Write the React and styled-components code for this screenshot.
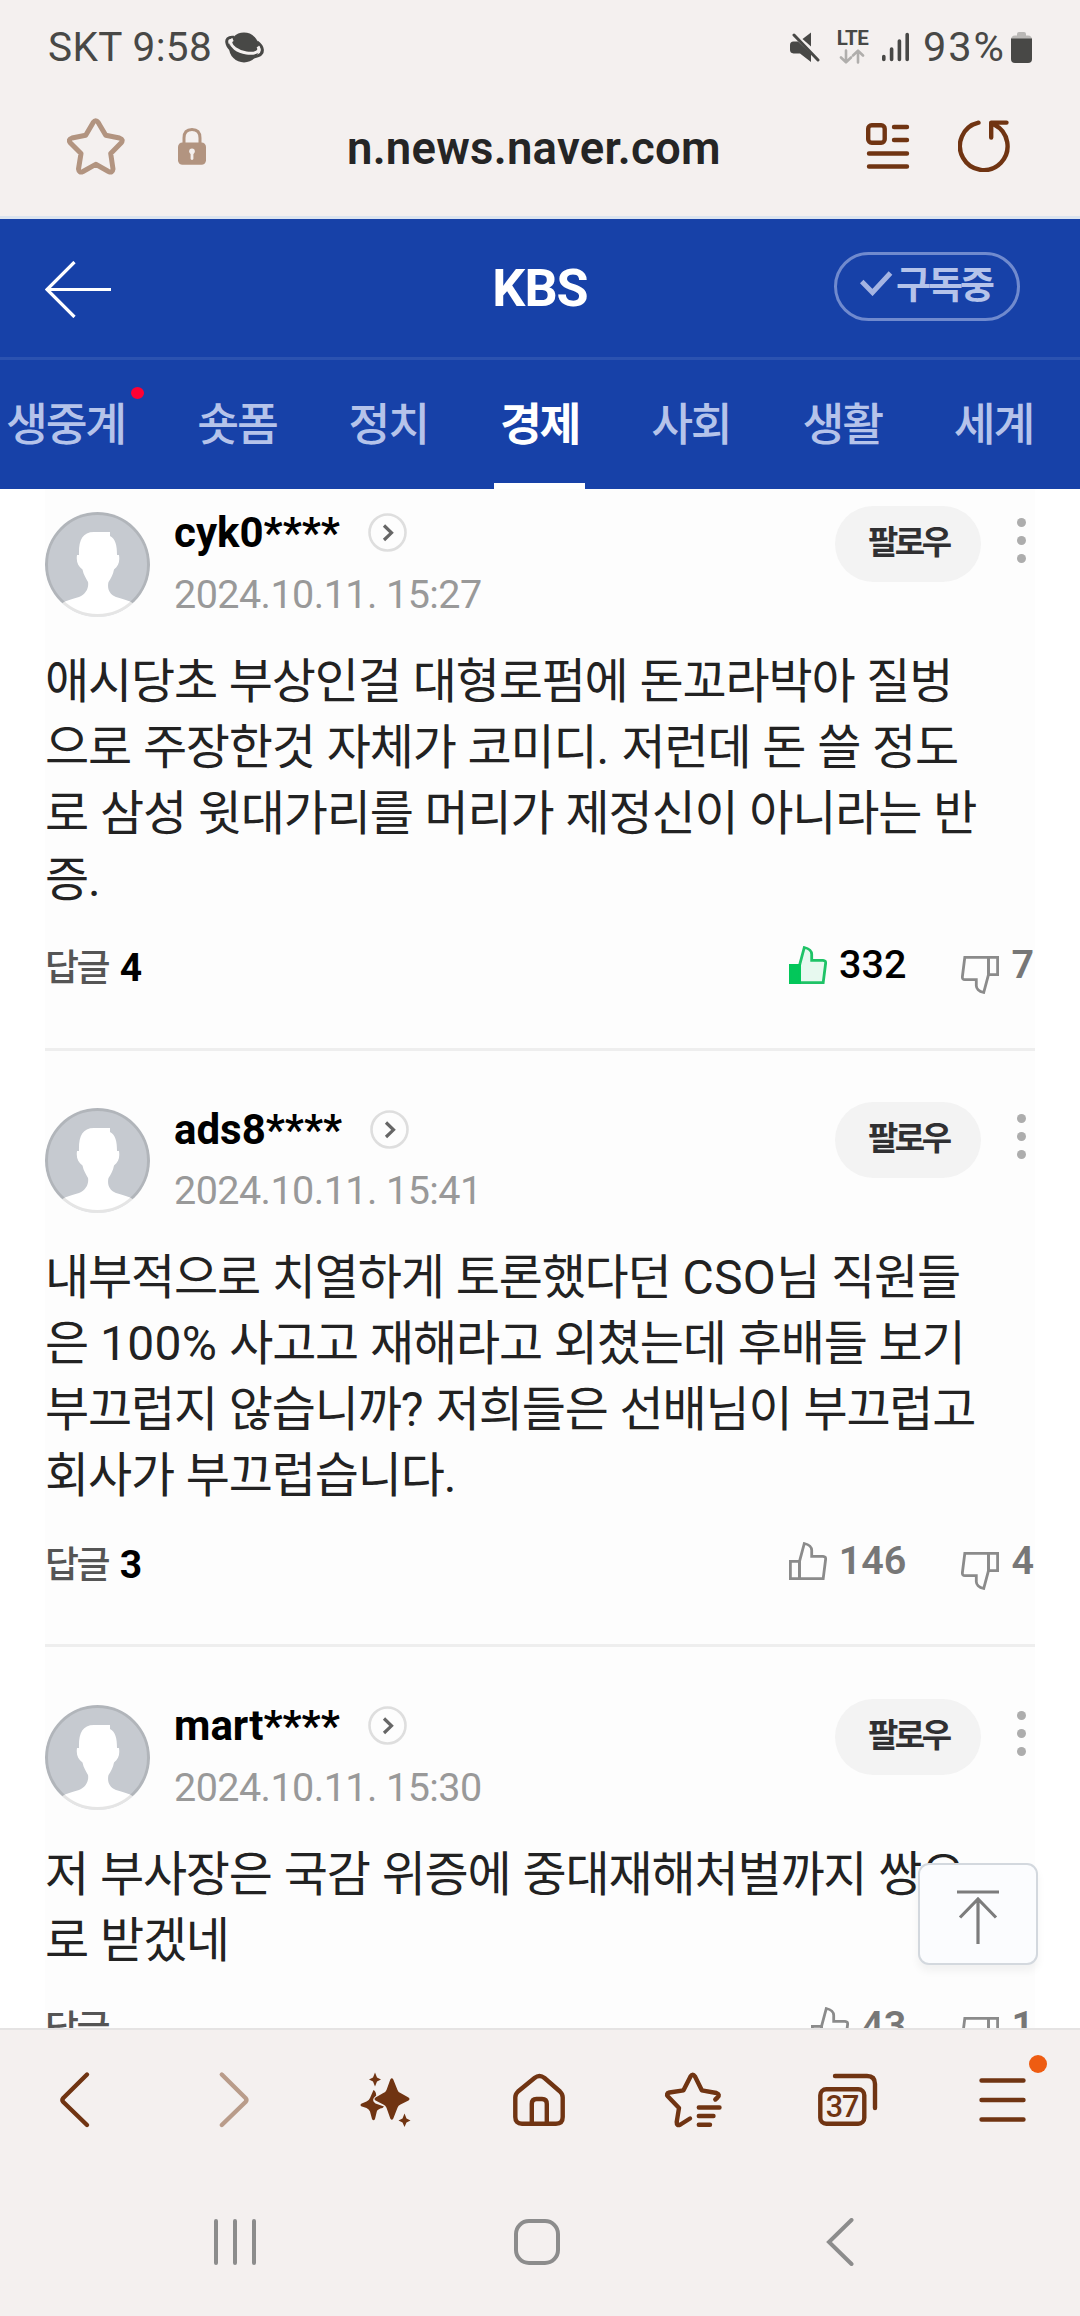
import React from 'react'
import styled, { createGlobalStyle } from 'styled-components';

const comments = [
  {
    id: 1,
    name: 'cyk0****',
    date: '2024.10.11. 15:27',
    lines: [
      '애시당초 부상인걸 대형로펌에 돈꼬라박아 질벙',
      '으로 주장한것 자체가 코미디. 저런데 돈 쓸 정도',
      '로 삼성 윗대가리를 머리가 제정신이 아니라는 반',
      '증.',
    ],
    replies: 4,
    up: 332,
    down: 7,
    liked: true,
  },
  {
    id: 2,
    name: 'ads8****',
    date: '2024.10.11. 15:41',
    lines: [
      '내부적으로 치열하게 토론했다던 CSO님 직원들',
      '은 100% 사고고 재해라고 외쳤는데 후배들 보기',
      '부끄럽지 않습니까? 저희들은 선배님이 부끄럽고',
      '회사가 부끄럽습니다.',
    ],
    replies: 3,
    up: 146,
    down: 4,
  },
  {
    id: 3,
    name: 'mart****',
    date: '2024.10.11. 15:30',
    lines: [
      '저 부사장은 국감 위증에 중대재해처벌까지 쌍으',
      '로 받겠네',
    ],
    replies: '',
    up: 43,
    down: 1,
  },
];

const tabs = [
  { label: '생중계', wide: true, live: true },
  { label: '숏폼' },
  { label: '정치' },
  { label: '경제', active: true },
  { label: '사회' },
  { label: '생활' },
  { label: '세계' },
];

// latin runs keep their normal spacing, only hangul is tightened
function splitLatin(line) {
  return line.split(/([A-Z0-9%.?]+)/).map((part, i) => (i % 2 ? <span key={i}>{part}</span> : part));
}

function StatusIcons() {
  return (
    <StatusRight>
      <svg width="30" height="30" viewBox="0 0 30 30" fill="#484846">
        <path d="M21 0.500V14.500L12.500 7Z" />
        <path d="M3.500 9.500H8L21 22V30L10 21.500H3.500Q0 21 0 18V13Q0 9.500 3.500 9.500Z" />
        <path d="M4 3L28 28" stroke="#484846" strokeWidth="3" strokeLinecap="round" />
      </svg>
      <Network>
        <b>LTE</b>
        <svg width="26" height="15" viewBox="0 0 26 15" fill="none" stroke="#b0aeac" strokeWidth="2.6" strokeLinecap="round" strokeLinejoin="round">
          <path d="M7 1.5V13M2 8.5L7 13.3L12 8.5M19 13.5V2M14 6.5L19 1.7L24 6.5" />
        </svg>
      </Network>
      <svg width="27" height="30" viewBox="0 0 27 30" stroke="#484846" strokeWidth="3.6" strokeLinecap="round">
        <path d="M1.8 24.5V27.5M9.6 17V27.5M17.4 9V27.5M25.2 2.5V27.5" />
      </svg>
      <Battery>93%</Battery>
      <svg width="21" height="31" viewBox="0 0 21 31">
        <path d="M6 2Q6 0 8 0H13Q15 0 15 2V3.500H17Q21 3.500 21 8H0Q0 3.500 4 3.500H6Z" fill="#bab8b6" />
        <path d="M0 6.500H21V27Q21 31 17 31H4Q0 31 0 27Z" fill="#484846" />
      </svg>
    </StatusRight>
  )
}

function Avatar() {
  return (
    <svg width="105" height="105" viewBox="0 0 105 105">
      <clipPath id="face"><circle cx="52.500" cy="52.500" r="52.500" /></clipPath>
      <g clipPath="url(#face)">
        <rect width="105" height="105" fill="#c6cad0" />
        <path fill="#fff" d="M49 20H65V24C70.500 27 72 33 72 43H74C75 50 73.500 54 69 57.500C68 63 66 66 63.500 70C62 76 64 82 71 85C78 87.500 84 88 89 92V106H16V92C21 88 27 87.500 34 85C41 82 44 76 43 70C41 66 38.500 63 37.500 57.500C33 54 31 50 32 43H34C33.500 29 37 20 49 20Z" />
        <circle cx="52.500" cy="52.500" r="51" fill="none" stroke="#000" strokeOpacity="0.1" strokeWidth="3" />
      </g>
    </svg>
  )
}

function Thumb({ liked, down }) {
  const color = liked ? '#1fc367' : '#8b8b8b';
  return (
    <ThumbSvg $down={down} width="38" height="38" viewBox="0 0 38 38" fill="none" stroke={color} strokeWidth="2.800">
      <path d="M10.500 19.300L15.300 1.500C20 2.500 23 5.500 22.700 9V14.300H34Q37 14.500 36.600 17.500L34.200 36.600H10.500Z" fill={liked ? '#e7f9ef' : 'none'} />
      <path d="M10.500 19.300H1.400V36.600H10.500Z" fill={liked ? '#03c75a' : 'none'} stroke={liked ? '#03c75a' : color} />
    </ThumbSvg>
  )
}

function Comment({ item }) {
  return (
    <CommentItem>
      <CommentHead>
        <Avatar />
        <Writer>
          <div className='name'>
            {item.name}
            <svg width="39" height="39" viewBox="0 0 39 39" fill="none">
              <circle cx="19.500" cy="19.500" r="18" stroke="#dedede" strokeWidth="2.6" />
              <path d="M16 12.500L23.500 19.800L16 27" stroke="#666" strokeWidth="3.2" />
            </svg>
          </div>
          <div className='date'>{item.date}</div>
        </Writer>
        <FollowButton>팔로우</FollowButton>
        <MoreDots width="9" height="45" viewBox="0 0 9 45" fill="#adadad">
          <circle cx="4.500" cy="4.500" r="4.500" />
          <circle cx="4.500" cy="22.500" r="4.500" />
          <circle cx="4.500" cy="40.500" r="4.500" />
        </MoreDots>
      </CommentHead>
      <CommentText>
        {item.lines.map((line) => <p key={line}>{splitLatin(line)}</p>)}
      </CommentText>
      <CommentFoot>
        <Replies>답글 <b>{item.replies}</b></Replies>
        <Vote $on={item.liked}>
          <Thumb liked={item.liked} />
          {item.up}
        </Vote>
        <Vote>
          <Thumb down />
          {item.down}
        </Vote>
      </CommentFoot>
    </CommentItem>
  )
}

function Toolbar() {
  return (
    <ToolbarRow>
      <ToolIcon viewBox="0 0 64 64"><path d="M42 6.500L18.300 30Q16.500 32 18.300 34L42 57" /></ToolIcon>
      <ToolIcon viewBox="0 0 64 64" $dim><path d="M22.800 6.500L46.500 30Q48.300 32 46.500 34L22.800 57" /></ToolIcon>
      <ToolIcon viewBox="0 0 64 64" $solid>
        <path d="M19.500 22Q22 23 22.200 27.500Q16.500 32 21.500 35.500L30 38.500L28.500 40Q23.500 41 22.800 43.500L21 51Q19.500 53.500 18 51L16 43.500Q15 41 12.500 40L7.200 38.200Q5.500 37 7.200 35.800L12.500 33.500Q15 32.500 16 30Z" />
        <path d="M36.300 11.500Q37.800 9 39.300 11.500L43.500 22Q44.300 24.300 46.500 25L54.500 29.500Q56.500 31 54.500 32.500L46.500 36.500Q44.300 37.500 43.500 39.700L39.300 50.500Q37.800 53 36.300 50.500L32.500 39.700Q31.500 37.500 29.300 36.500L21.500 32.500Q19.500 31 21.500 29.500L29.300 25Q31.500 24.300 32.500 22Z" />
        <path d="M21 4.500L23 9.500L27 11.500L23 13.500L21 18.500L19 13.500L15 11.500L19 9.500Z" />
        <path d="M50.500 45.500L52.500 50.500L56.500 52.500L52.500 54.500L50.500 59L48.500 54.500L44.500 52.500L48.500 50.500Z" />
      </ToolIcon>
      <ToolIcon viewBox="0 0 64 64">
        <path d="M14 55.700Q7.300 55.700 7.300 49V29.500Q7.300 26 10 23.500L26.500 10Q31.500 6 36.500 10L52 23.500Q54.700 26 54.700 29.500V49Q54.700 55.700 48 55.700Z" />
        <path d="M23.800 55V36Q23.800 31 28.500 31H34Q38.800 31 38.800 36V55" />
      </ToolIcon>
      <ToolIcon viewBox="0 0 64 64">
        <path d="M27 50.500L17.500 56.500Q13.500 58.500 13.700 54L16 40L5 28.500Q2.500 25.500 6.500 24.500L20.500 22.300L27.500 8.500Q29.700 5 32 8.500L38.800 22.300L53.500 25Q57.500 26.500 54.500 29.500L52.300 31.500" />
        <path d="M35.800 39.500H56.500M35.800 48H50.500M35.800 56.800H47" />
      </ToolIcon>
      <ToolIcon viewBox="0 0 64 64">
        <rect x="3.300" y="21.200" width="44" height="34.500" rx="6" />
        <path d="M18 8H50Q58 8 58 16V40" />
        <text x="25" y="48.800">37</text>
      </ToolIcon>
      <MenuButton>
        <ToolIcon viewBox="0 0 64 64"><path d="M9.500 12.500H51.500M9.500 32H51.500M9.500 51.500H51.500" /></ToolIcon>
        <span />
      </MenuButton>
    </ToolbarRow>
  )
}

function App() {
  return (
    <Phone>
      <GlobalStyle />
      <StatusBar>
        SKT 9:58
        <svg width="39" height="31" viewBox="0 0 39 31">
          <circle cx="19" cy="15.500" r="15" fill="#484846" />
          <path d="M9 5.300C3.500 4.500 0.500 7 2.200 12C4 18 13 23.500 22 24.800C31 26 38 23 37.300 17.500C37 15 35.500 12.500 32 10" fill="none" stroke="#484846" strokeWidth="3" />
          <path d="M8 7.500C4.500 9 5 12.500 10 16.500C16 21 27 23 32.500 19.500C34 18.500 34 16.500 33 14.500" fill="none" stroke="#f4f0ef" strokeWidth="3" />
        </svg>
        <StatusIcons />
      </StatusBar>
      <AddressBar>
        <div className='site'>
          <svg width="58" height="57" viewBox="0 0 58 57" fill="none" stroke="#b29480" strokeWidth="5" strokeLinejoin="round">
            <path d="M26.200 4.500Q28.700 0.800 31.200 4.500L38.700 17.300L52.500 20Q57 21.500 54 25L43.700 35.500L46 51Q45.500 55.500 41.500 53.500L28.700 46.300L16 53.500Q12 55.500 11.500 51L14 35.500L3.500 25Q0.500 21.500 5 20L18.700 17.300Z" />
          </svg>
          <svg width="28" height="37" viewBox="0 0 28 37">
            <path d="M6 17V10Q6 1.500 14 1.500T22 10V17" fill="none" stroke="#b29480" strokeWidth="3" />
            <rect y="14.500" width="28" height="22.300" rx="4.500" fill="#b29480" />
            <path d="M14 23V30.500" stroke="#f4f0ef" strokeWidth="2.800" strokeLinecap="round" />
            <circle cx="14" cy="23.200" r="2.800" fill="#f4f0ef" />
          </svg>
        </div>
        <span>n.news.naver.com</span>
        <div className='actions'>
          <svg width="44" height="46" viewBox="0 0 44 46" fill="none" stroke="#703412" strokeWidth="4.400" strokeLinecap="round">
            <rect x="2.200" y="2.200" width="16.500" height="17.500" rx="3.500" />
            <path d="M28 4H41M28 17H41M3 30.500H41M3 43.500H41" />
          </svg>
          <svg width="52" height="52" viewBox="0 0 52 52" fill="none" stroke="#703412" strokeWidth="4.400" strokeLinecap="round" strokeLinejoin="round">
            <path d="M20.500 2.700A23.800 24 0 1 0 36.500 4.700M33.200 17.500V2.600H48.500" />
          </svg>
        </div>
      </AddressBar>
      <Masthead>
        <svg width="66" height="57" viewBox="0 0 66 57" fill="none" stroke="#fff" strokeWidth="3.200">
          <path d="M29.500 1L2 28.500L29.500 56M2 28.500H66" />
        </svg>
        <h1>KBS</h1>
        <Subscribed>
          <svg width="33" height="25" viewBox="0 0 33 25" fill="none" stroke="#a5b4e2" strokeWidth="5">
            <path d="M1.700 10.500L12.500 21.500L30.500 2" />
          </svg>
          구독중
        </Subscribed>
      </Masthead>
      <TabList>
        {tabs.map((tab) => (
          <Tab key={tab.label} $wide={tab.wide} $active={tab.active}>
            {tab.label}
            {tab.live && <LiveDot />}
          </Tab>
        ))}
      </TabList>
      <Feed>
        <CommentList>
          {comments.map((item) => <Comment key={item.id} item={item} />)}
        </CommentList>
        <TopButton>
          <svg width="44" height="56" viewBox="0 0 44 56" fill="none" stroke="#7c7c7c" strokeWidth="3.200">
            <path d="M1 3H43M22 55V10M4 28.500L22 10L40 28.500" />
          </svg>
        </TopButton>
      </Feed>
      <BottomArea>
        <Toolbar />
        <SystemNav>
          <svg width="42" height="46" viewBox="0 0 42 46"><path d="M2 2V44M21 2V44M40 2V44" /></svg>
          <svg width="46" height="46" viewBox="0 0 46 46"><rect x="2" y="2" width="42" height="42" rx="13" /></svg>
          <svg width="28" height="48" viewBox="0 0 28 48"><path d="M25.500 2L3 24L25.500 46" /></svg>
        </SystemNav>
      </BottomArea>
    </Phone>
  )
}

const GlobalStyle = createGlobalStyle`
  * {
    box-sizing: border-box;
  }
  body {
    margin: 0;
    background: #fff;
    font-family: Roboto, 'Noto Sans CJK KR', sans-serif;
  }
  h1, p {
    margin: 0;
  }
  svg {
    display: block;
    flex: none;
  }
`;

const Phone = styled.div`
  width: 1080px;
  height: 2316px;
  display: flex;
  flex-direction: column;
  overflow: hidden;
`;

const StatusBar = styled.div`
  height: 94px;
  flex: none;
  display: flex;
  align-items: center;
  gap: 13px;
  padding: 0 48px;
  background: #f4f0ef;
  color: #484846;
  font-size: 40.500px;
  line-height: 44px;
  letter-spacing: 0.400px;
`;

const StatusRight = styled.div`
  margin-left: auto;
  display: flex;
  align-items: center;
`;

const Network = styled.div`
  width: 33px;
  margin: 0 13px 0 16px;
  display: flex;
  flex-direction: column;
  align-items: center;
  gap: 3px;
  b {
    font-size: 20.5px;
    line-height: 15px;
    font-weight: 700;
    letter-spacing: -0.5px;
  }
`;

const Battery = styled.span`
  margin: 0 5px 0 14px;
  font-size: 41.500px;
  letter-spacing: 2px;
`;

const AddressBar = styled.div`
  height: 125px;
  flex: none;
  display: grid;
  grid-template-columns: 347px 374px 1fr;
  align-items: center;
  padding-bottom: 18px;
  background: #f4f0ef;
  border-bottom: 3px solid #dbe4ef;
  span {
    padding-top: 5px;
    color: #252525;
    font-size: 45.5px;
    font-weight: 600;
    line-height: 54px;
    letter-spacing: 0.250px;
    white-space: nowrap;
  }
  .site {
    display: flex;
    align-items: center;
    gap: 53px;
    padding-left: 67px;
  }
  .actions {
    display: flex;
    align-items: center;
    justify-content: flex-end;
    gap: 48px;
    padding-right: 70px;
  }
`;

const Masthead = styled.header`
  height: 141px;
  flex: none;
  display: grid;
  grid-template-columns: 1fr auto 1fr;
  align-items: center;
  padding: 2px 60px 0 45px;
  background: #1741a8;
  border-bottom: 3px solid #2b52b0;
  h1 {
    padding-left: 15px;
    color: #fff;
    font-size: 52px;
    font-weight: 700;
    line-height: 60px;
    letter-spacing: -1px;
  }
`;

const Subscribed = styled.div`
  width: 186px;
  height: 69px;
  margin-bottom: 5px;
  justify-self: end;
  display: flex;
  align-items: center;
  gap: 3px;
  padding: 0 0 3px 23px;
  border: 3px solid #708ace;
  border-radius: 35px;
  color: #b5c3ea;
  font-size: 38px;
  font-weight: 700;
  line-height: 44px;
  letter-spacing: -3px;
  white-space: nowrap;
  svg {
    margin-top: -3px;
  }
`;

const TabList = styled.nav`
  height: 129px;
  flex: none;
  display: flex;
  gap: 60.300px;
  padding-left: 1px;
  background: #1741a8;
`;

const Tab = styled.div`
  position: relative;
  flex: none;
  width: ${(p) => (p.$wide ? 130 : 91)}px;
  padding: 0 0 0 ${(p) => (p.$wide ? 5 : 6)}px;
  border-bottom: 6px solid ${(p) => (p.$active ? '#fff' : 'transparent')};
  color: ${(p) => (p.$active ? '#fff' : '#b5c3ea')};
  font-size: 45.500px;
  font-weight: ${(p) => (p.$active ? 700 : 500)};
  line-height: 132px;
  letter-spacing: -2.200px;
  white-space: nowrap;
`;

const LiveDot = styled.i`
  position: absolute;
  right: -13px;
  top: 27px;
  width: 13px;
  height: 12px;
  border-radius: 50%;
  background: #ff0033;
`;

const Feed = styled.main`
  position: relative;
  flex: 1;
  min-height: 0;
  overflow: hidden;
`;

const CommentList = styled.div`
  margin: -35px 45px 0;
  background: #fdfdfd;
`;

const CommentItem = styled.article`
  display: flex;
  flex-direction: column;
  border-bottom: 3px solid #eee;
`;

const CommentHead = styled.div`
  height: 194.670px;
  display: flex;
  align-items: flex-start;
  padding-top: 57.670px;
`;

const Writer = styled.div`
  margin-left: 24px;
  flex: 1;
  .name {
    display: flex;
    align-items: center;
    gap: 28px;
    height: 42px;
    color: #000;
    font-size: 42px;
    font-weight: 700;
    letter-spacing: 0;
  }
  .date {
    margin-top: 18px;
    color: #999;
    font-size: 39.500px;
    line-height: 46px;
    letter-spacing: -0.550px;
  }
`;

const FollowButton = styled.div`
  width: 146px;
  height: 76px;
  margin-top: -6px;
  padding: 0 0 4px 33px;
  border-radius: 38px;
  background: #f3f3f3;
  color: #303032;
  font-size: 33px;
  font-weight: 700;
  line-height: 74px;
  letter-spacing: -3.500px;
  white-space: nowrap;
`;

const MoreDots = styled.svg`
  margin: 6px 9px 0 36px;
`;

const CommentText = styled.div`
  color: #222;
  font-size: 48px;
  line-height: 66px;
  letter-spacing: -1.180px;
  word-spacing: 1.200px;
  white-space: nowrap;
  span {
    letter-spacing: 0.300px;
  }
`;

const CommentFoot = styled.div`
  height: 135px;
  display: flex;
  align-items: center;
  padding-bottom: 25px;
`;

const Replies = styled.div`
  flex: 1;
  color: #555;
  font-size: 37px;
  font-weight: 500;
  line-height: 44px;
  letter-spacing: -2.500px;
  padding-top: 2px;
  b {
    margin-left: 5px;
    color: #000;
    font-size: 39px;
    font-weight: 700;
  }
`;

const Vote = styled.div`
  display: flex;
  align-items: center;
  gap: 12px;
  margin: 0 1px 6px 54px;
  color: ${(p) => (p.$on ? '#000' : '#777')};
  font-size: 39.500px;
  font-weight: ${(p) => (p.$on ? 500 : 600)};
  line-height: 46px;
`;

const ThumbSvg = styled.svg`
  ${(p) => p.$down && 'transform: rotate(180deg); margin-top: 20px;'}
`;

const TopButton = styled.div`
  position: absolute;
  right: 42px;
  bottom: 63px;
  width: 120px;
  height: 102px;
  display: flex;
  align-items: center;
  justify-content: center;
  padding-top: 5px;
  border: 2px solid #d3d8de;
  border-radius: 11px;
  background: #fbfcfe;
  box-shadow: 0 6px 8px rgba(0, 0, 0, 0.05);
`;

const BottomArea = styled.footer`
  height: 288px;
  flex: none;
  border-top: 2px solid #e5e3e3;
  background: #f4f0ef;
`;

const ToolbarRow = styled.div`
  display: grid;
  grid-template-columns: repeat(7, 154.500px);
  justify-content: center;
  justify-items: center;
  padding-top: 38px;
`;

const ToolIcon = styled.svg`
  width: 64px;
  height: 64px;
  fill: ${(p) => (p.$solid ? '#703412' : 'none')};
  stroke: ${(p) => (p.$solid ? 'none' : p.$dim ? '#b99c8a' : '#703412')};
  stroke-width: 4.400;
  stroke-linecap: round;
  stroke-linejoin: round;
  text {
    fill: #703412;
    stroke: none;
    font-size: 30.500px;
    font-weight: 500;
    text-anchor: middle;
    letter-spacing: -1px;
  }
`;

const MenuButton = styled.div`
  position: relative;
  span {
    position: absolute;
    left: 57px;
    top: -13px;
    width: 18px;
    height: 18px;
    border-radius: 50%;
    background: #ee5c12;
  }
`;

const SystemNav = styled.div`
  display: grid;
  grid-template-columns: 300px 1fr 28px;
  align-items: center;
  height: 48px;
  margin: 86px 226px 0 214px;
  svg {
    fill: none;
    stroke: #8c8c8c;
    stroke-width: 4;
    stroke-linecap: round;
  }
`;

export default App;
